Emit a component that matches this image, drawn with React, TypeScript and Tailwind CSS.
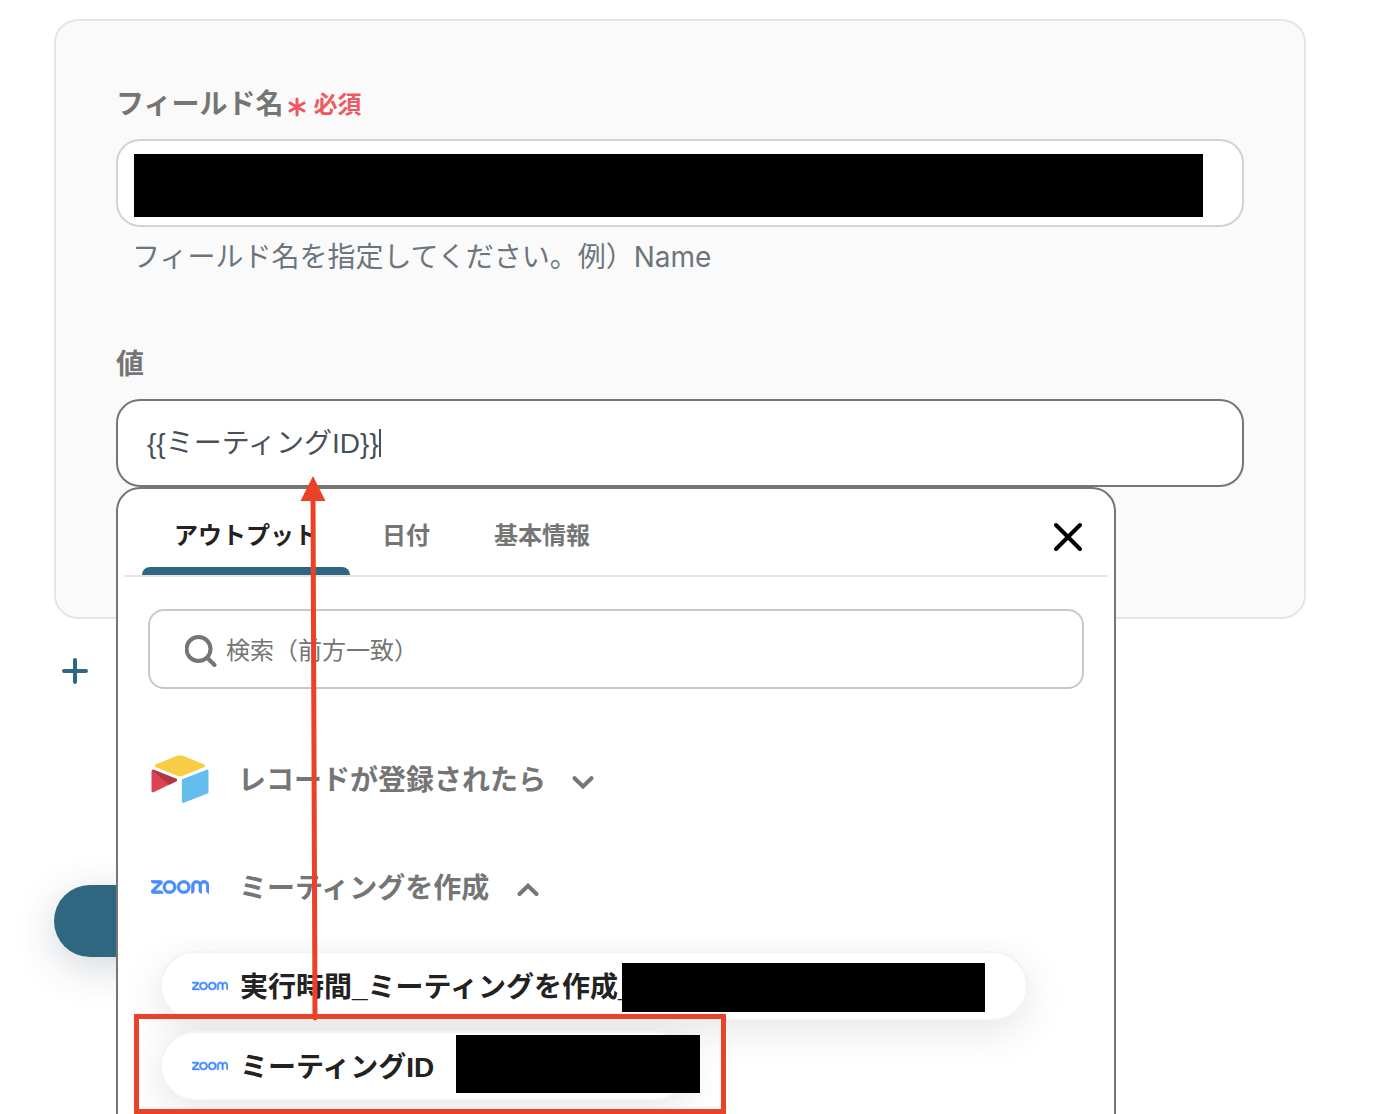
import { useState } from 'react';
import { SiZoom } from 'react-icons/si';

const TABS = [
    { id: 'output', label: 'アウトプット' },
    { id: 'date', label: '日付' },
    { id: 'basic', label: '基本情報' },
];

function AirtableLogo() {
    return (
        <svg viewBox="11 10 177 149" className="h-12 w-[58px]" aria-hidden="true">
            <path fill="#f8cd46" d="M90.04 12.37 24.08 39.66c-3.67 1.52-3.63 6.73.06 8.19l66.24 26.27a24.58 24.58 0 0 0 18.12 0l66.24-26.27c3.69-1.46 3.73-6.67.06-8.19L108.84 12.37a24.58 24.58 0 0 0-18.8 0" />
            <path fill="#63beef" d="M105.31 88.46v65.62c0 3.12 3.15 5.26 6.05 4.11l73.81-28.65a4.41 4.41 0 0 0 2.79-4.1V59.81c0-3.12-3.15-5.26-6.05-4.1l-73.81 28.64a4.42 4.42 0 0 0-2.79 4.11" />
            <path fill="#dc4452" d="m88.08 91.85-21.9 10.57-2.23 1.07-46.24 22.16c-2.93 1.41-6.67-.73-6.67-3.98V60.09c0-1.18.6-2.19 1.41-2.96.34-.34.73-.62 1.13-.84 1.11-.67 2.7-.85 4.05-.31l70.11 27.78c3.56 1.41 3.84 6.41.34 8.09" />
            <path fill="#b23545" d="m88.08 91.85-21.9 10.57-53.73-45.3c.34-.34.73-.62 1.13-.84 1.11-.67 2.7-.85 4.05-.31l70.11 27.78c3.56 1.41 3.84 6.41.34 8.1" />
        </svg>
    );
}

function Chevron({ up = false }: { up?: boolean }) {
    return (
        <svg viewBox="0 0 24 16" className="mt-[5px] h-4 w-6" fill="none" stroke="#757575" strokeWidth="4" strokeLinecap="round" aria-hidden="true">
            <path d={up ? 'M3.500 12 12 3.800l8.500 8.200' : 'M3.500 4.200 12 12.400l8.500-8.200'} />
        </svg>
    );
}

export default function App() {
    const [tab, setTab] = useState('output');
    const [value, setValue] = useState('{{ミーティングID}}');

    return (
        <main className="h-screen overflow-hidden bg-white pt-[19px] pr-[78px] pl-[54px] font-['Liberation_Sans','Noto_Sans_CJK_JP',sans-serif] text-[28px] leading-10 text-[#757575]">
            <section className="rounded-3xl border-2 border-[#e5e5e5] bg-[#fafafa] px-[60px] pt-16 pb-[130px]">
                <label htmlFor="field-name" className="flex h-10 items-center gap-[5px] font-bold">
                    フィールド名
                    <span className="flex items-center gap-[7px] text-2xl text-[#ed5a63]">
                        <svg viewBox="0 0 18 20" className="mt-1 h-5 w-[18px]" stroke="currentColor" strokeWidth="3" strokeLinecap="round" aria-hidden="true">
                            <path d="M9 2v16M2 6l14 8M16 6 2 14" />
                        </svg>
                        必須
                    </span>
                </label>
                <div className="relative mt-[14px]">
                    <input id="field-name" type="text" className="block h-[88px] w-full rounded-3xl border-2 border-[#ced4da] bg-white px-[30px] outline-none" />
                    <span className="absolute top-[15px] right-[41px] left-[18px] h-[63px] bg-black" />
                </div>
                <p className="mt-[10px] px-4 font-['Inter','Noto_Sans_CJK_JP',sans-serif] text-[#6c757d]">フィールド名を指定してください。例）Name</p>

                <label htmlFor="field-value" className="mt-[68px] block h-10 font-bold">値</label>
                <div className="relative mt-[14px]">
                    <div className="relative">
                        <input
                            id="field-value"
                            type="text"
                            value={value}
                            onChange={(e) => setValue(e.target.value)}
                            className="block h-[88px] w-full rounded-3xl border-2 border-[#757575] bg-white px-[29px] pb-1 text-[#495057] outline-none"
                        />
                        <span className="absolute top-[30px] left-[263px] h-7 w-[2px] bg-[#495057]" />
                    </div>

                    <div className="absolute top-full left-0 z-10 h-[720px] w-[1000px] rounded-3xl border-2 border-[#757575] bg-white">
                        <div className="mx-[6px] flex h-[88px] items-stretch border-b-2 border-[#e5e5e5] pl-[18px] text-2xl font-bold">
                            {TABS.map((t) => (
                                <button
                                    key={t.id}
                                    type="button"
                                    onClick={() => setTab(t.id)}
                                    className={`relative px-8 pt-3 pb-1 ${tab === t.id ? 'text-[#222222]' : ''}`}
                                >
                                    {t.label}
                                    {tab === t.id && <span className="absolute inset-x-0 bottom-0 h-2 rounded-t-lg bg-[#2f6780]" />}
                                </button>
                            ))}
                            <button type="button" aria-label="閉じる" className="mt-[10px] mr-6 ml-auto">
                                <svg viewBox="0 0 32 32" className="h-8 w-8" stroke="#000" strokeWidth="4" strokeLinecap="round" aria-hidden="true">
                                    <path d="m4 4 24 24M28 4 4 28" />
                                </svg>
                            </button>
                        </div>

                        <label className="mx-[30px] mt-8 flex h-20 items-center gap-[9px] rounded-2xl border-2 border-[#c8c8c8] pt-[3px] pl-[35px]">
                            <svg viewBox="0 0 32 32" className="h-8 w-8" fill="none" stroke="#757575" strokeWidth="4" strokeLinecap="round" aria-hidden="true">
                                <circle cx="13.500" cy="14" r="12" />
                                <path d="m22.500 23 7 7" />
                            </svg>
                            <input
                                type="text"
                                placeholder="検索（前方一致）"
                                className="min-w-0 flex-1 text-2xl outline-none placeholder:text-[#757575] placeholder:opacity-100"
                            />
                        </label>

                        <div className="mt-[70px] flex flex-col gap-[68px] pl-[33px] font-bold">
                            <button type="button" className="flex h-10 items-center">
                                <AirtableLogo />
                                <span className="mr-[25px] ml-[29px] pt-1">レコードが登録されたら</span>
                                <Chevron />
                            </button>
                            <button type="button" className="flex h-10 items-center">
                                <SiZoom className="h-[58px] w-[58px] stroke-[#4a8cff] stroke-[0.3] text-[#4a8cff]" />
                                <span className="mr-[27px] ml-[30px] pt-1">ミーティングを作成</span>
                                <Chevron up />
                            </button>
                        </div>

                        <div className="mt-[30px] flex flex-col items-start gap-[10px] overflow-hidden pt-[14px] pb-12 pl-[42px] font-bold text-[#222222]">
                            <button type="button" className="flex h-[70px] w-[868px] items-center gap-3 rounded-full border-2 border-[#f3f3f3] bg-white pl-[30px] shadow-[0_10px_40px_rgba(0,0,0,0.1)]">
                                <SiZoom className="h-9 w-9 shrink-0 stroke-[#4a8cff] stroke-[0.3] text-[#4a8cff]" />
                                <span className="relative pt-1">
                                    実行時間_ミーティングを作成_
                                    <span className="absolute -top-px left-[382px] h-[49px] w-[363px] bg-black" />
                                </span>
                            </button>
                            <div className="relative">
                                <button type="button" className="flex h-[70px] w-[530px] items-center gap-3 rounded-full border-2 border-[#f3f3f3] bg-white pl-[30px] shadow-[0_10px_40px_rgba(0,0,0,0.1)]">
                                    <SiZoom className="h-9 w-9 shrink-0 stroke-[#4a8cff] stroke-[0.3] text-[#4a8cff]" />
                                    <span className="pt-1">ミーティングID</span>
                                </button>
                                <span className="absolute top-1 left-[296px] h-[58px] w-[244px] bg-black" />
                                <span className="pointer-events-none absolute -top-[17px] -left-[26px] h-[100px] w-[592px] border-5 border-[#ea4128]" />
                            </div>
                        </div>

                        {/* drag arrow from the picked output up to the value field */}
                        <svg viewBox="0 0 32 548" className="pointer-events-none absolute -top-4 left-[180px] h-[548px] w-8" aria-hidden="true">
                            <path d="M15 20 17 545" stroke="#ea4128" strokeWidth="5" strokeLinecap="round" />
                            <path d="M15 3 27.500 28h-25z" fill="#ea4128" />
                        </svg>
                    </div>
                </div>
            </section>

            <button type="button" aria-label="追加" className="mt-9 ml-[5px] block">
                <svg viewBox="0 0 32 32" className="h-8 w-8" stroke="#2f6780" strokeWidth="4" strokeLinecap="round" aria-hidden="true">
                    <path d="M16 5v22M5 16h22" />
                </svg>
            </button>
            <button type="button" aria-label="保存" className="mt-[198px] block h-[72px] w-60 rounded-full bg-[#2f6780] shadow-[0_10px_40px_rgba(34,51,68,0.2)]" />
        </main>
    );
}
